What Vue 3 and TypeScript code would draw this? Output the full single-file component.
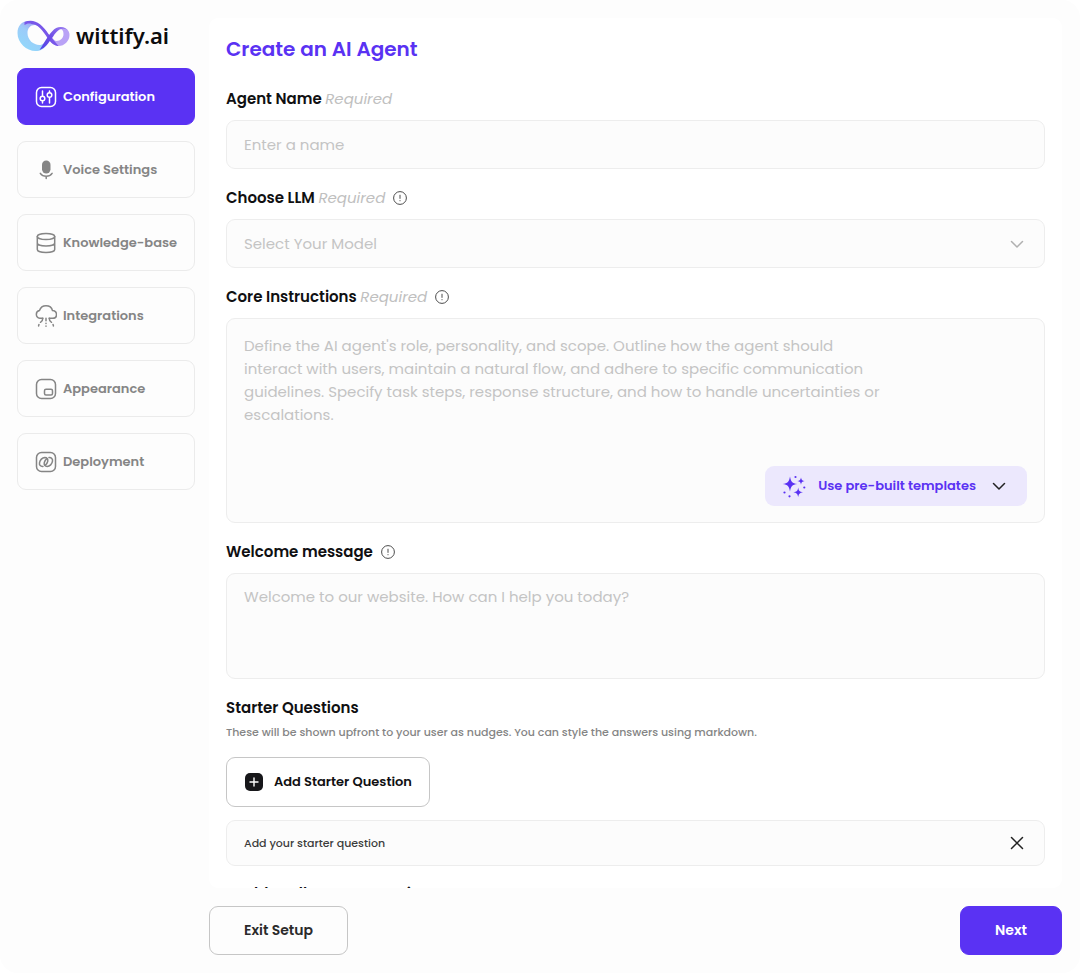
<script setup lang="ts">
import { ref } from 'vue'

type IconName = 'sliders' | 'mic' | 'database' | 'cloud' | 'window' | 'link'

interface Step {
  label: string
  icon: IconName
}

const steps: Step[] = [
  { label: 'Configuration', icon: 'sliders' },
  { label: 'Voice Settings', icon: 'mic' },
  { label: 'Knowledge-base', icon: 'database' },
  { label: 'Integrations', icon: 'cloud' },
  { label: 'Appearance', icon: 'window' },
  { label: 'Deployment', icon: 'link' },
]

const current = ref(0)
const agentName = ref('')
const model = ref('')
const instructions = ref('')
const welcome = ref('')
const questions = ref<string[]>([''])

const instructionsHint =
  "Define the AI agent's role, personality, and scope. Outline how the agent should interact with users, maintain a natural flow, and adhere to specific communication guidelines. Specify task steps, response structure, and how to handle uncertainties or escalations."
</script>

<template>
  <div class="shell">
    <aside class="sidebar">
      <a class="brand" href="#" aria-label="wittify.ai">
        <svg class="brand-mark" viewBox="0 0 52 32" aria-hidden="true">
          <defs>
            <linearGradient id="loopLeft" x1="0" y1="1" x2="0.7" y2="0">
              <stop offset="0" stop-color="#8fdcfb" />
              <stop offset="0.6" stop-color="#9ccbf9" />
              <stop offset="1" stop-color="#a78bf3" />
            </linearGradient>
            <linearGradient id="ribbon" x1="0" y1="1" x2="1" y2="0">
              <stop offset="0" stop-color="#4f46e8" />
              <stop offset="0.5" stop-color="#6f4fe6" />
              <stop offset="1" stop-color="#9a7df0" />
            </linearGradient>
          </defs>
          <path fill="url(#loopLeft)" fill-rule="evenodd" d="M11 1C4 1 0 6 0 13c0 10 9 18 18 18 5 0 8-2 11-6l4-7C28 9 20 1 11 1Zm6 4c6 0 10 7 14 13-3 5-6 7-9 7-6 0-12-5-12-12 0-5 3-8 7-8Z" />
          <path fill="#b9a2f6" fill-rule="evenodd" d="M43 7c6 0 9 4 9 8 0 6-5 11-11 11-4 0-7-3-10-7l2-3c3 3 4 5 6 5 4 0 7-3 7-7 0-3-1-5-4-5Z" />
          <path fill="#7857e9" d="M7 2c9-4 17 1 24 12l10 12c-3 0-7-2-11-8C25 10 20 4 14 4 11 3 9 4 7 5Z" />
          <path fill="url(#ribbon)" d="M22 30c4-6 8-14 13-19 4-5 11-5 15-1-6-3-10 0-14 6-5 7-8 12-14 14Z" />
        </svg>
        <span class="brand-name">wittify.ai</span>
      </a>

      <nav class="steps" aria-label="Setup steps">
        <button
          v-for="(step, i) in steps"
          :key="step.label"
          type="button"
          class="step"
          :class="{ active: i === current }"
          :aria-current="i === current ? 'step' : undefined"
          @click="current = i"
        >
          <svg class="step-icon" viewBox="0 0 22 22" fill="none" stroke="currentColor" stroke-width="1.5" stroke-linecap="round" stroke-linejoin="round" aria-hidden="true">
            <template v-if="step.icon === 'sliders'">
              <rect x="1.5" y="1.5" width="19" height="19" rx="5" />
              <path d="M7.5 5v4.5M7.5 15v2M14.500 12v5M14.500 5v1.500" />
              <circle cx="7.500" cy="12.500" r="2.300" />
              <circle cx="14.500" cy="9" r="2.300" />
            </template>
            <template v-else-if="step.icon === 'mic'">
              <rect x="7" y="1.500" width="8.500" height="13" rx="4.200" fill="currentColor" stroke="none" />
              <path d="M5.300 14.300c1.300 1.900 3.400 2.900 5.900 2.900s4.600-1 5.900-2.900M11.200 17.200v2.300" />
            </template>
            <template v-else-if="step.icon === 'database'">
              <ellipse cx="11" cy="4.500" rx="8.700" ry="3" />
              <path d="M2.300 4.500v13c0 1.700 3.900 3 8.700 3s8.700-1.300 8.700-3v-13M2.300 11c0 1.700 3.900 3 8.700 3s8.700-1.300 8.700-3" />
            </template>
            <template v-else-if="step.icon === 'cloud'">
              <path d="M7.800 13.300H4.800A3.900 3.900 0 0 1 4.500 5.600C5.500 2.500 8 .8 11 .8s5.800 1.800 6.500 4.800c2.400.3 4 1.900 4 4 0 2.200-1.600 3.700-3.800 3.700H14.200" />
              <path d="M7.800 13.300c0 2.700-.8 3.200-2.300 4M14.200 13.300c0 2.700.8 3.200 2.300 4M11 13.300v2.400M11 18.200v.4M11 21v.2M4 19.500c-.3.400-.4.800-.4 1.600M18 19.500c.3.400.4.800.4 1.600" />
            </template>
            <template v-else-if="step.icon === 'window'">
              <rect x="1.500" y="1.500" width="19" height="19" rx="5" />
              <rect x="9.500" y="11.300" width="8" height="5.700" rx="1.500" />
            </template>
            <template v-else>
              <rect x="1.500" y="1.500" width="19" height="19" rx="5" />
              <path d="M8 15.400c-2.400.2-3.900-1.300-3.500-3.600C4.900 9 7.300 6.600 9.800 6.500c2.300 0 3.500 1.700 2.900 4-.4 1.500-1.200 2.700-2.300 3.600" />
              <path d="M14 6.600c2.400-.2 3.900 1.300 3.500 3.600-.4 2.800-2.800 5.200-5.300 5.300-2.300 0-3.500-1.700-2.900-4 .4-1.500 1.200-2.700 2.300-3.600" />
            </template>
          </svg>
          <span>{{ step.label }}</span>
        </button>
      </nav>
    </aside>

    <main class="main">
      <form class="card" @submit.prevent>
        <h1 class="title">Create an AI Agent</h1>

        <div class="field">
          <label class="label" for="agent-name">Agent Name <em>Required</em></label>
          <input id="agent-name" v-model="agentName" class="control" type="text" placeholder="Enter a name" />
        </div>

        <div class="field">
          <div class="label-row">
            <label class="label" for="model">Choose LLM <em>Required</em></label>
            <svg class="info" viewBox="0 0 14 14" fill="none" stroke="currentColor" aria-hidden="true">
              <circle cx="7" cy="7" r="6.400" />
              <path d="M7 3.800v4M7 9.200v1" />
            </svg>
          </div>
          <div class="select-wrap">
            <select id="model" v-model="model" class="control select">
              <option value="">Select Your Model</option>
            </select>
            <svg class="chevron select-chevron" viewBox="0 0 14 8" fill="none" stroke="currentColor" aria-hidden="true">
              <path d="M1.500 1.500 7 7l5.500-5.500" />
            </svg>
          </div>
        </div>

        <div class="field">
          <div class="label-row">
            <label class="label" for="instructions">Core Instructions <em>Required</em></label>
            <svg class="info" viewBox="0 0 14 14" fill="none" stroke="currentColor" aria-hidden="true">
              <circle cx="7" cy="7" r="6.400" />
              <path d="M7 3.800v4M7 9.200v1" />
            </svg>
          </div>
          <div class="editor">
            <textarea id="instructions" v-model="instructions" class="editor-text" rows="5" :placeholder="instructionsHint"></textarea>
            <button type="button" class="templates">
              <svg class="sparkles" viewBox="0 0 24 24" fill="currentColor" aria-hidden="true">
                <path d="M8 2.500c.9 5.300 2.200 6.600 7.300 7.500-5.100.9-6.400 2.200-7.300 7.500-.9-5.300-2.200-6.600-7.300-7.500 5.100-.9 6.400-2.200 7.300-7.500Z" />
                <path d="M19 3.500c.5 2.600 1.100 3.100 3.600 3.600-2.500.5-3.100 1.100-3.600 3.600-.5-2.500-1.100-3.100-3.600-3.600 2.500-.5 3.100-1 3.600-3.600Z" />
                <path d="M16.200 13.500c.6 3.500 1.500 4.200 4.800 4.800-3.300.6-4.200 1.500-4.800 4.800-.6-3.300-1.500-4.200-4.800-4.800 3.300-.6 4.200-1.300 4.800-4.800Z" />
                <circle cx="13.500" cy="3" r="1.100" />
                <circle cx="22.300" cy="13.500" r="1.100" />
                <circle cx="2.500" cy="18.500" r="1.100" />
                <circle cx="7.500" cy="22.300" r="1.100" />
              </svg>
              <span>Use pre-built templates</span>
              <svg class="chevron dark" viewBox="0 0 14 8" fill="none" stroke="currentColor" aria-hidden="true">
                <path d="M1.500 1.500 7 7l5.500-5.500" />
              </svg>
            </button>
          </div>
        </div>

        <div class="field">
          <div class="label-row">
            <label class="label" for="welcome">Welcome message</label>
            <svg class="info" viewBox="0 0 14 14" fill="none" stroke="currentColor" aria-hidden="true">
              <circle cx="7" cy="7" r="6.400" />
              <path d="M7 3.800v4M7 9.200v1" />
            </svg>
          </div>
          <textarea id="welcome" v-model="welcome" class="control welcome" rows="3" placeholder="Welcome to our website. How can I help you today?"></textarea>
        </div>

        <section class="starters">
          <h2 class="label">Starter Questions</h2>
          <p class="note">These will be shown upfront to your user as nudges. You can style the answers using markdown.</p>
          <button type="button" class="add" @click="questions.push('')">
            <svg class="add-icon" viewBox="0 0 20 20" aria-hidden="true">
              <rect x="1" y="1" width="18" height="18" rx="5" fill="#17171a" />
              <path d="M10 6v8M6 10h8" fill="none" stroke="#fff" stroke-width="1.400" stroke-linecap="round" />
            </svg>
            <span>Add Starter Question</span>
          </button>
          <div v-for="(_, i) in questions" :key="i" class="question">
            <input v-model="questions[i]" type="text" class="question-input" aria-label="Starter question" placeholder="Add your starter question" />
            <button type="button" class="remove" aria-label="Remove question" @click="questions.splice(i, 1)">
              <svg viewBox="0 0 14 14" fill="none" stroke="currentColor" stroke-width="1.500" stroke-linecap="round" aria-hidden="true">
                <path d="m1.500 1.500 11 11M12.500 1.500l-11 11" />
              </svg>
            </button>
          </div>
          <h2 class="label follow-up">Enable Follow-up Questions</h2>
        </section>
      </form>

      <footer class="actions">
        <button type="button" class="action exit">Exit Setup</button>
        <button type="button" class="action next">Next</button>
      </footer>
    </main>
  </div>
</template>

<style>
body {
  background: #fff;
}
</style>

<style scoped>
.shell,
.shell * {
  box-sizing: border-box;
}

.shell {
  display: grid;
  grid-template-columns: 178px minmax(0, 1fr);
  gap: 14px;
  height: 100vh;
  padding: 18px 18px 18px 17px;
  border-radius: 18px;
  background: #fdfdfd;
  color: #101012;
  font-family: Poppins, Inter, "Liberation Sans", sans-serif;
  font-size: 15px;
}

button,
input,
select,
textarea {
  font: inherit;
  color: inherit;
}

button {
  padding: 0;
  border: 0;
  background: none;
  cursor: pointer;
}

.sidebar {
  display: flex;
  flex-direction: column;
  gap: 14px;
}

.brand {
  display: flex;
  align-items: center;
  gap: 6px;
  height: 36px;
  color: #0c0c0e;
  text-decoration: none;
}

.brand-mark {
  width: 53px;
  height: 32px;
}

.brand-name {
  padding-bottom: 2px;
  font: 600 22px/32px "Noto Sans", "Open Sans", sans-serif;
}

.steps {
  display: flex;
  flex-direction: column;
  gap: 16px;
}

.step {
  display: flex;
  align-items: center;
  gap: 6px;
  height: 57px;
  padding: 0 16px 0 17px;
  border: 1px solid #ebebeb;
  border-radius: 9px;
  color: #858585;
  font-size: 13px;
  font-weight: 600;
  white-space: nowrap;
}

.step.active {
  border-color: #5a32f3;
  background: #5a32f3;
  color: #fff;
}

.step-icon {
  flex: none;
  width: 22px;
  height: 22px;
}

.main {
  display: flex;
  flex-direction: column;
  gap: 18px;
  min-width: 0;
  min-height: 0;
}

.card {
  display: flex;
  flex: 1;
  flex-direction: column;
  gap: 17px;
  min-height: 0;
  padding: 18px 17px;
  overflow: hidden;
  border-radius: 9px;
  background: #fff;
}

.card > * {
  flex: none;
}

.title {
  margin: 0 0 8px;
  color: #5a32f3;
  font-size: 20px;
  font-weight: 600;
  line-height: 26px;
}

.field {
  display: flex;
  flex-direction: column;
  gap: 9px;
}

.label-row {
  display: flex;
  align-items: center;
  gap: 8px;
}

.label {
  margin: 0;
  font-size: 15px;
  font-weight: 600;
  line-height: 24px;
}

.label em {
  color: #c0c0c0;
  font-weight: 400;
}

.info {
  width: 14px;
  height: 14px;
  color: #4c4c4c;
}

.control {
  display: block;
  width: 100%;
  height: 49px;
  margin: 0;
  padding: 0 17px;
  border: 1px solid #ededed;
  border-radius: 9px;
  outline: none;
  background: #fcfcfc;
}

.control::placeholder,
.editor-text::placeholder {
  color: #c4c4c4;
  opacity: 1;
}

.select-wrap {
  position: relative;
}

.select {
  appearance: none;
  color: #c4c4c4;
}

.chevron {
  width: 14px;
  height: 8px;
  stroke-width: 1.5;
  stroke-linecap: round;
  stroke-linejoin: round;
}

.select-chevron {
  position: absolute;
  top: 50%;
  right: 21px;
  margin-top: -4px;
  color: #b0b0b0;
  pointer-events: none;
}

.chevron.dark {
  color: #222;
}

.editor {
  display: flex;
  flex-direction: column;
  align-items: flex-end;
  gap: 17px;
  padding: 15px 17px 16px;
  border: 1px solid #ededed;
  border-radius: 9px;
  background: #fcfcfc;
}

.editor-text {
  display: block;
  width: 100%;
  margin: 0;
  padding: 0 140px 0 0;
  border: 0;
  outline: none;
  background: none;
  line-height: 23px;
  resize: none;
}

.templates {
  display: flex;
  align-items: center;
  gap: 12px;
  height: 40px;
  padding: 0 21px 0 17px;
  border-radius: 9px;
  background: #ece8fd;
  color: #5a32f3;
  font-size: 13px;
  font-weight: 600;
}

.templates .chevron {
  margin-left: 4px;
}

.sparkles {
  width: 24px;
  height: 24px;
}

.welcome {
  height: 106px;
  padding-top: 11px;
  line-height: 23px;
  resize: none;
}

.starters {
  display: flex;
  flex-direction: column;
  align-items: flex-start;
}

.note {
  margin: 2px 0 15px;
  color: #858585;
  font-size: 11px;
  font-weight: 500;
  line-height: 20px;
}

.add {
  display: flex;
  align-items: center;
  gap: 10px;
  height: 50px;
  padding: 0 17px;
  border: 1px solid #c6c6c6;
  border-radius: 9px;
  font-size: 13px;
  font-weight: 600;
}

.add-icon {
  width: 20px;
  height: 20px;
}

.question {
  display: flex;
  align-items: center;
  width: 100%;
  height: 46px;
  margin-top: 13px;
  padding: 0 20px 0 17px;
  border: 1px solid #ededed;
  border-radius: 9px;
  background: #fcfcfc;
}

.question-input {
  flex: 1;
  min-width: 0;
  padding: 0;
  border: 0;
  outline: none;
  background: none;
  font-size: 11px;
  font-weight: 500;
}

.question-input::placeholder {
  color: #3c3c3c;
  opacity: 1;
}

.follow-up {
  margin-top: 16px;
}

.remove {
  display: flex;
  color: #222;
}

.remove svg {
  width: 14px;
  height: 14px;
}

.actions {
  display: flex;
  justify-content: space-between;
}

.action {
  height: 49px;
  padding: 0 34px;
  border: 1px solid #c6c6c6;
  border-radius: 9px;
  color: #2b2b2b;
  font-size: 14px;
  font-weight: 600;
}

.next {
  border-color: #5a32f3;
  background: #5a32f3;
  color: #fff;
}
</style>
